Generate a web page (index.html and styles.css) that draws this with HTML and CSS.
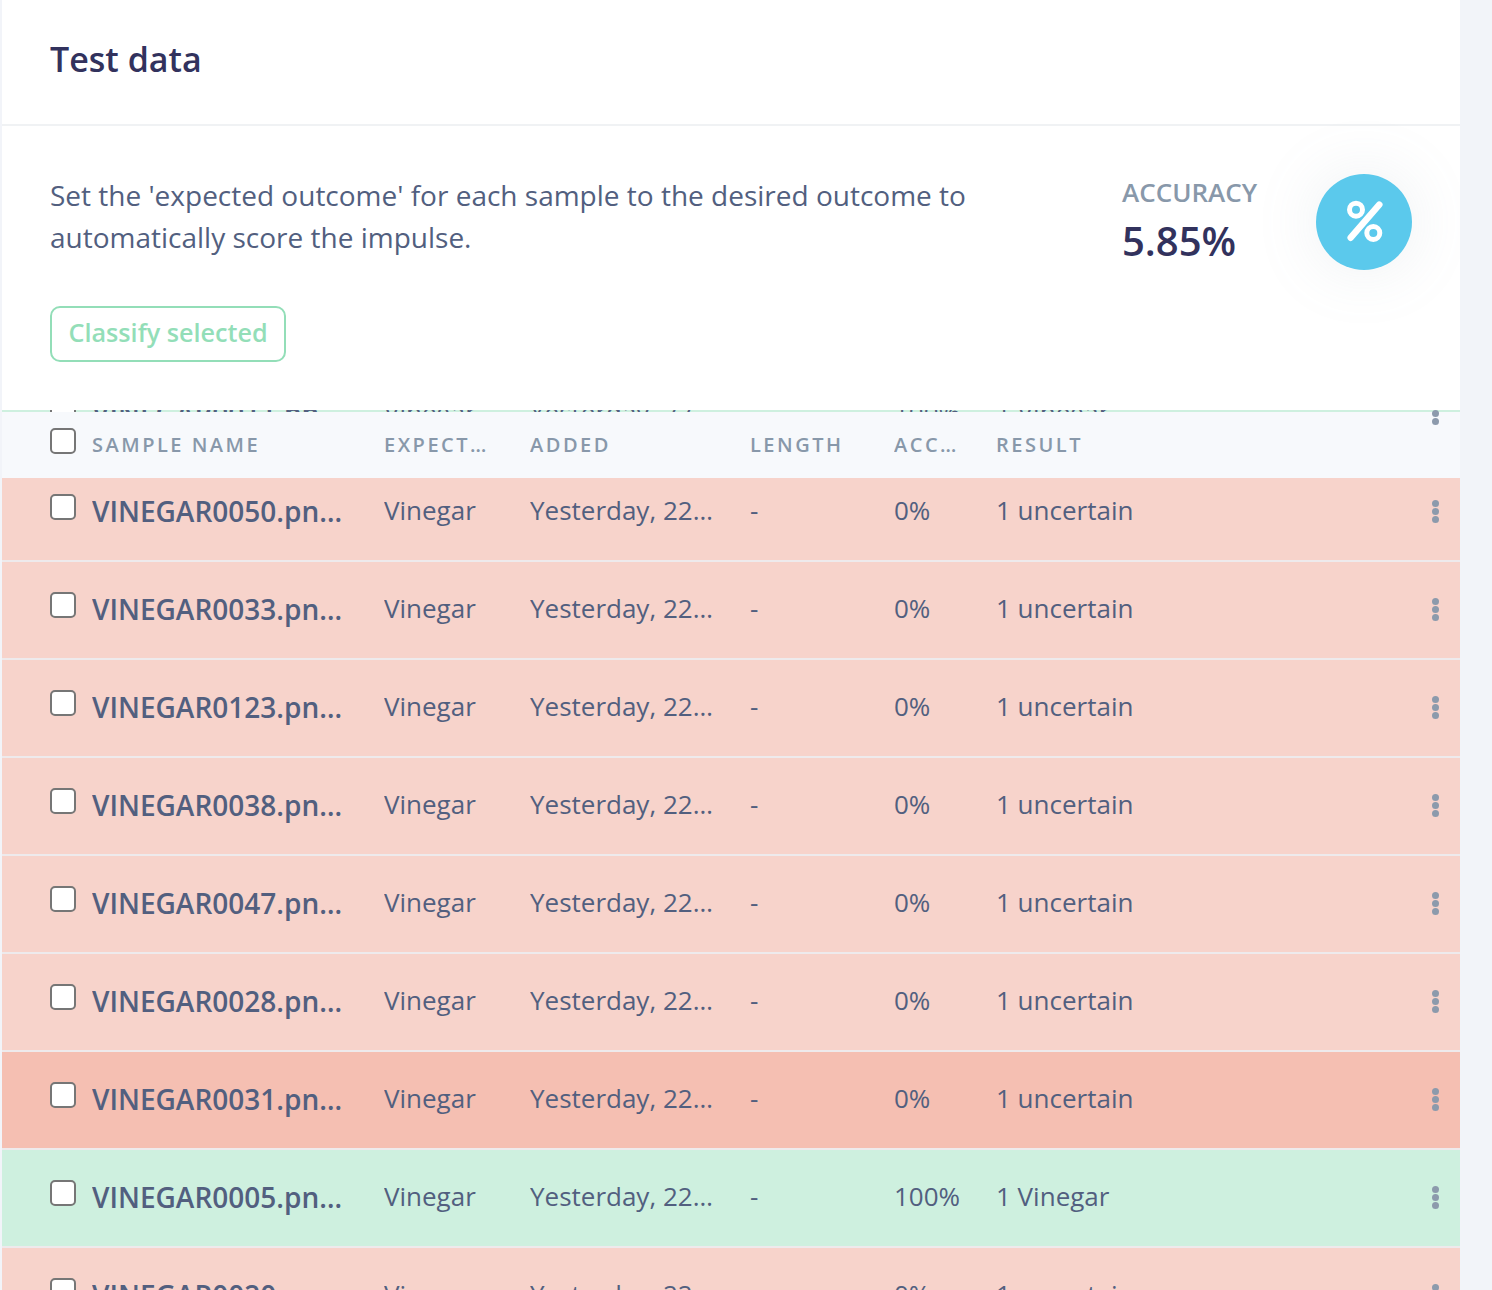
FILE: index.html
```html
<!DOCTYPE html>
<html>

<head>
    <title>Test data</title>
    <link rel="stylesheet" href="styles.css">
</head>

<body>
    <div class="panel">
        <div class="panelHead">
            <h1>Test data</h1>
        </div>

        <div class="intro">
            <div class="introText">
                <p>Set the 'expected outcome' for each sample to the desired outcome to automatically score the impulse.</p>
                <button class="classifyBtn" disabled>Classify selected</button>
            </div>
            <div class="stat">
                <div class="statText">
                    <div class="statLabel">Accuracy</div>
                    <div class="statValue">5.85%</div>
                </div>
                <div class="statIcon">
                    <svg viewBox="0 0 96 96" width="96" height="96">
                        <path class="pct" d="M63.3 30.6 34.7 63.7" />
                        <circle class="pct thin" cx="40" cy="35.7" r="6.5" />
                        <circle class="pct thin" cx="57.3" cy="59" r="6.5" />
                    </svg>
                </div>
            </div>
        </div>

        <div class="tableWrap">
            <div class="tableHead">
                <input type="checkbox" class="check">
                <div class="cell">Sample name</div>
                <div class="cell">Expected outcome</div>
                <div class="cell">Added</div>
                <div class="cell">Length</div>
                <div class="cell">Accuracy</div>
                <div class="cell">Result</div>
            </div>

            <div class="rows">
                <div class="row good">
                    <input type="checkbox" class="check">
                    <div class="cell name">VINEGAR0011.png.2hk4s7</div>
                    <div class="cell">Vinegar</div>
                    <div class="cell">Yesterday, 22:14:09</div>
                    <div class="cell">-</div>
                    <div class="cell">100%</div>
                    <div class="cell">1 Vinegar</div>
                    <div class="menu"><i></i><i></i><i></i></div>
                </div>
                <div class="row bad">
                    <input type="checkbox" class="check">
                    <div class="cell name">VINEGAR0050.png.2hk4t1</div>
                    <div class="cell">Vinegar</div>
                    <div class="cell">Yesterday, 22:14:09</div>
                    <div class="cell">-</div>
                    <div class="cell">0%</div>
                    <div class="cell">1 uncertain</div>
                    <div class="menu"><i></i><i></i><i></i></div>
                </div>
                <div class="row bad">
                    <input type="checkbox" class="check">
                    <div class="cell name">VINEGAR0033.png.2hk4t9</div>
                    <div class="cell">Vinegar</div>
                    <div class="cell">Yesterday, 22:14:09</div>
                    <div class="cell">-</div>
                    <div class="cell">0%</div>
                    <div class="cell">1 uncertain</div>
                    <div class="menu"><i></i><i></i><i></i></div>
                </div>
                <div class="row bad">
                    <input type="checkbox" class="check">
                    <div class="cell name">VINEGAR0123.png.2hk4u3</div>
                    <div class="cell">Vinegar</div>
                    <div class="cell">Yesterday, 22:14:09</div>
                    <div class="cell">-</div>
                    <div class="cell">0%</div>
                    <div class="cell">1 uncertain</div>
                    <div class="menu"><i></i><i></i><i></i></div>
                </div>
                <div class="row bad">
                    <input type="checkbox" class="check">
                    <div class="cell name">VINEGAR0038.png.2hk4u8</div>
                    <div class="cell">Vinegar</div>
                    <div class="cell">Yesterday, 22:14:09</div>
                    <div class="cell">-</div>
                    <div class="cell">0%</div>
                    <div class="cell">1 uncertain</div>
                    <div class="menu"><i></i><i></i><i></i></div>
                </div>
                <div class="row bad">
                    <input type="checkbox" class="check">
                    <div class="cell name">VINEGAR0047.png.2hk4v2</div>
                    <div class="cell">Vinegar</div>
                    <div class="cell">Yesterday, 22:14:09</div>
                    <div class="cell">-</div>
                    <div class="cell">0%</div>
                    <div class="cell">1 uncertain</div>
                    <div class="menu"><i></i><i></i><i></i></div>
                </div>
                <div class="row bad">
                    <input type="checkbox" class="check">
                    <div class="cell name">VINEGAR0028.png.2hk4v6</div>
                    <div class="cell">Vinegar</div>
                    <div class="cell">Yesterday, 22:14:09</div>
                    <div class="cell">-</div>
                    <div class="cell">0%</div>
                    <div class="cell">1 uncertain</div>
                    <div class="menu"><i></i><i></i><i></i></div>
                </div>
                <div class="row hover">
                    <input type="checkbox" class="check">
                    <div class="cell name">VINEGAR0031.png.2hk4w1</div>
                    <div class="cell">Vinegar</div>
                    <div class="cell">Yesterday, 22:14:09</div>
                    <div class="cell">-</div>
                    <div class="cell">0%</div>
                    <div class="cell">1 uncertain</div>
                    <div class="menu"><i></i><i></i><i></i></div>
                </div>
                <div class="row good">
                    <input type="checkbox" class="check">
                    <div class="cell name">VINEGAR0005.png.2hk4w5</div>
                    <div class="cell">Vinegar</div>
                    <div class="cell">Yesterday, 22:14:09</div>
                    <div class="cell">-</div>
                    <div class="cell">100%</div>
                    <div class="cell">1 Vinegar</div>
                    <div class="menu"><i></i><i></i><i></i></div>
                </div>
                <div class="row bad">
                    <input type="checkbox" class="check">
                    <div class="cell name">VINEGAR0020.png.2hk4x2</div>
                    <div class="cell">Vinegar</div>
                    <div class="cell">Yesterday, 22:14:09</div>
                    <div class="cell">-</div>
                    <div class="cell">0%</div>
                    <div class="cell">1 uncertain</div>
                    <div class="menu"><i></i><i></i><i></i></div>
                </div>
            </div>
        </div>
    </div>
</body>

</html>
```
FILE: styles.css
```css
html,
body {
    margin: 0;
    height: 100%;
}

body {
    font-family: 'Open Sans', 'Noto Sans', sans-serif;
    background-color: #f2f4f9;
    color: #525f7f;
    overflow: hidden;
}

.panel {
    width: 1458px;
    height: 1290px;
    margin-left: 2px;
    background-color: #fff;
    overflow: hidden;
}

.panelHead {
    display: flex;
    align-items: center;
    height: 118px;
    padding: 0 48px 6px;
    border-bottom: 2px solid #f0f2f4;
}

h1 {
    margin: 0;
    font-size: 34px;
    font-weight: 600;
    color: #32325d;
}

/* Intro with accuracy */
.intro {
    display: flex;
    justify-content: space-between;
    padding: 48px 48px 48px;
}

.introText {
    width: 960px;
}

.introText p {
    margin: 0 0 48px;
    font-size: 28px;
    line-height: 42px;
}

.classifyBtn {
    display: block;
    box-sizing: border-box;
    height: 56px;
    padding: 0 16.5px 5px;
    border: 2px solid #93deb8;
    border-radius: 10px;
    background-color: #fff;
    color: #93deb8;
    font-family: inherit;
    font-size: 25.2px;
    font-weight: 600;
}

.stat {
    display: flex;
    align-items: flex-start;
}

.statText {
    width: 194px;
}

.statLabel {
    margin-top: 1px;
    font-size: 26px;
    line-height: 34px;
    font-weight: 600;
    color: #8898aa;
    text-transform: uppercase;
}

.statValue {
    margin-top: 5px;
    font-size: 40px;
    line-height: 54px;
    font-weight: 600;
    color: #32325d;
}

.statIcon {
    width: 96px;
    height: 96px;
    border-radius: 50%;
    background-color: #5bc9ec;
    box-shadow: 0 0 64px rgba(136, 152, 170, 0.15);
}

.pct {
    fill: none;
    stroke: #fff;
    stroke-width: 6.5;
    stroke-linecap: round;
}

.pct.thin {
    stroke-width: 5;
}

/* Table */
.tableWrap {
    position: relative;
    height: 880px;
    overflow: hidden;
}

.rows {
    margin-top: -44px;
}

.tableHead,
.row {
    display: grid;
    grid-template-columns: 42px 292px 146px 220px 144px 102px 1fr 28px;
    box-sizing: border-box;
    padding-left: 48px;
}

.tableHead {
    position: absolute;
    top: 2px;
    left: 0;
    right: 0;
    z-index: 1;
    height: 66px;
    background-color: #f7f9fc;
    font-size: 20px;
    font-weight: 600;
    letter-spacing: 2.5px;
    line-height: 66px;
    color: #8898aa;
    text-transform: uppercase;
}

.row {
    height: 98px;
    border-bottom: 2px solid #eeeaec;
    font-size: 26px;
    line-height: 42px;
}

.row.bad {
    background-color: #f7d3cb;
}

.row.hover {
    background-color: #f5bfb2;
}

.row.good {
    background-color: #cef0df;
}

.cell {
    overflow: hidden;
    white-space: nowrap;
    text-overflow: ellipsis;
    padding-right: 32px;
}

.row .cell {
    padding-top: 25px;
}

.row .name {
    padding-top: 26px;
    padding-right: 38px;
    font-size: 28px;
    font-weight: 600;
}

.check {
    appearance: none;
    box-sizing: border-box;
    width: 26px;
    height: 26px;
    margin: 30px 0 0;
    border: 2px solid #767676;
    border-radius: 5px;
    background-color: #fff;
}

.tableHead .check {
    margin-top: 16px;
}

.menu {
    position: relative;
    z-index: 2;
    display: flex;
    flex-direction: column;
    gap: 1px;
    width: 7px;
    margin-top: 35.5px;
}

.menu i {
    display: block;
    width: 7px;
    height: 7px;
    border-radius: 50%;
    background-color: #8c9aac;
}
```
